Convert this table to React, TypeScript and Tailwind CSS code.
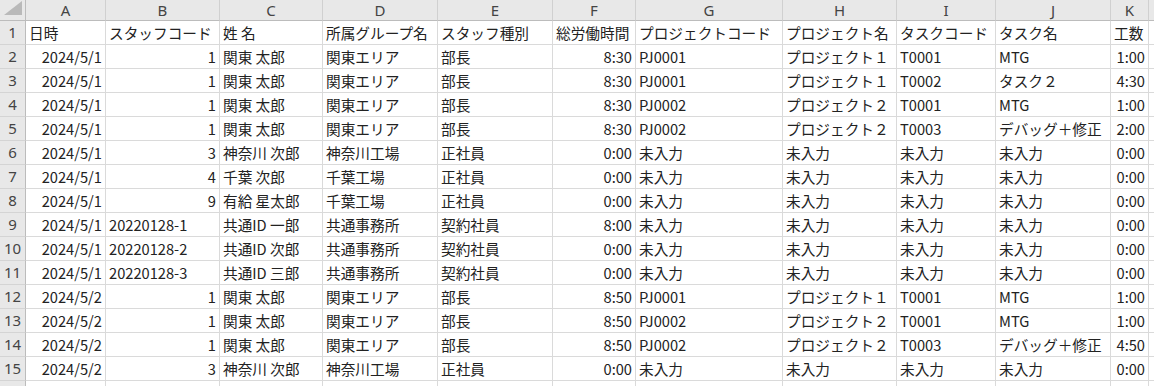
const cols = ['A', 'B', 'C', 'D', 'E', 'F', 'G', 'H', 'I', 'J', 'K']

type Row = [string, string, string, string, string, string, string, string, string, string, string]

const header: Row = ['日時', 'スタッフコード', '姓 名', '所属グループ名', 'スタッフ種別', '総労働時間', 'プロジェクトコード', 'プロジェクト名', 'タスクコード', 'タスク名', '工数']

const rows: Row[] = [
  ['2024/5/1', '1', '関東 太郎', '関東エリア', '部長', '8:30', 'PJ0001', 'プロジェクト１', 'T0001', 'MTG', '1:00'],
  ['2024/5/1', '1', '関東 太郎', '関東エリア', '部長', '8:30', 'PJ0001', 'プロジェクト１', 'T0002', 'タスク２', '4:30'],
  ['2024/5/1', '1', '関東 太郎', '関東エリア', '部長', '8:30', 'PJ0002', 'プロジェクト２', 'T0001', 'MTG', '1:00'],
  ['2024/5/1', '1', '関東 太郎', '関東エリア', '部長', '8:30', 'PJ0002', 'プロジェクト２', 'T0003', 'デバッグ＋修正', '2:00'],
  ['2024/5/1', '3', '神奈川 次郎', '神奈川工場', '正社員', '0:00', '未入力', '未入力', '未入力', '未入力', '0:00'],
  ['2024/5/1', '4', '千葉 次郎', '千葉工場', '正社員', '0:00', '未入力', '未入力', '未入力', '未入力', '0:00'],
  ['2024/5/1', '9', '有給 星太郎', '千葉工場', '正社員', '0:00', '未入力', '未入力', '未入力', '未入力', '0:00'],
  ['2024/5/1', '20220128-1', '共通ID 一郎', '共通事務所', '契約社員', '8:00', '未入力', '未入力', '未入力', '未入力', '0:00'],
  ['2024/5/1', '20220128-2', '共通ID 次郎', '共通事務所', '契約社員', '0:00', '未入力', '未入力', '未入力', '未入力', '0:00'],
  ['2024/5/1', '20220128-3', '共通ID 三郎', '共通事務所', '契約社員', '0:00', '未入力', '未入力', '未入力', '未入力', '0:00'],
  ['2024/5/2', '1', '関東 太郎', '関東エリア', '部長', '8:50', 'PJ0001', 'プロジェクト１', 'T0001', 'MTG', '1:00'],
  ['2024/5/2', '1', '関東 太郎', '関東エリア', '部長', '8:50', 'PJ0002', 'プロジェクト２', 'T0001', 'MTG', '1:00'],
  ['2024/5/2', '1', '関東 太郎', '関東エリア', '部長', '8:50', 'PJ0002', 'プロジェクト２', 'T0003', 'デバッグ＋修正', '4:50'],
  ['2024/5/2', '3', '神奈川 次郎', '神奈川工場', '正社員', '0:00', '未入力', '未入力', '未入力', '未入力', '0:00'],
]

// 数値・日付・時刻は右寄せ
const isNum = (v: string) => /^[\d/:]+$/.test(v)

function Cell({ v }: { v: string }) {
  return (
    <div
      className={`h-6 border-r border-b border-[#dadada] px-[3px] flex items-center overflow-hidden whitespace-nowrap bg-white ${
        isNum(v) ? 'justify-end' : 'justify-start'
      }`}
    >
      {v}
    </div>
  )
}

function RowHead({ n }: { n?: number }) {
  return (
    <div className="h-6 border-r border-b border-r-[#bcbcbc] border-b-[#d4d4d4] bg-[#e8e8e8] flex items-center justify-center text-[#444] font-['Noto_Sans',sans-serif] text-[15px]">
      {n}
    </div>
  )
}

export default function App() {
  return (
    <div className="w-[1154px] h-[386px] overflow-hidden bg-white text-[#222] text-[14.67px] font-['Noto_Sans_CJK_JP','Noto_Sans',sans-serif]">
      <div className="grid grid-cols-[26px_80px_114px_103px_115px_115px_83px_147px_114px_99px_115px_38px_1fr]">
        {/* 左上の角 */}
        <div className="h-[21px] bg-[#e8e8e8] border-r border-b border-[#bcbcbc] flex items-end justify-end pr-[3px] pb-[5px]">
          <svg width="18" height="14" viewBox="0 0 18 14">
            <polygon points="0,14 18,14 18,0" fill="#b9b9b9" />
          </svg>
        </div>
        {cols.map((c) => (
          <div
            key={c}
            className="h-[21px] bg-[#e8e8e8] border-r border-b border-r-[#d0d0d0] border-b-[#bcbcbc] flex items-center justify-center text-[#444] font-['Noto_Sans',sans-serif] text-[15px]"
          >
            {c}
          </div>
        ))}
        <div className="h-[21px] bg-[#e8e8e8] border-b border-[#bcbcbc]" />

        <RowHead n={1} />
        {header.map((v, i) => (
          <Cell key={i} v={v} />
        ))}
        <div className="h-6 border-b border-[#dadada]" />

        {rows.map((r, ri) => (
          <div key={ri} className="contents">
            <RowHead n={ri + 2} />
            {r.map((v, i) => (
              <Cell key={i} v={v} />
            ))}
            <div className="h-6 border-b border-[#dadada]" />
          </div>
        ))}

        {/* 16行目は上端だけ見える */}
        <RowHead />
        {cols.map((c) => (
          <Cell key={c} v="" />
        ))}
        <div className="h-6" />
      </div>
    </div>
  )
}
